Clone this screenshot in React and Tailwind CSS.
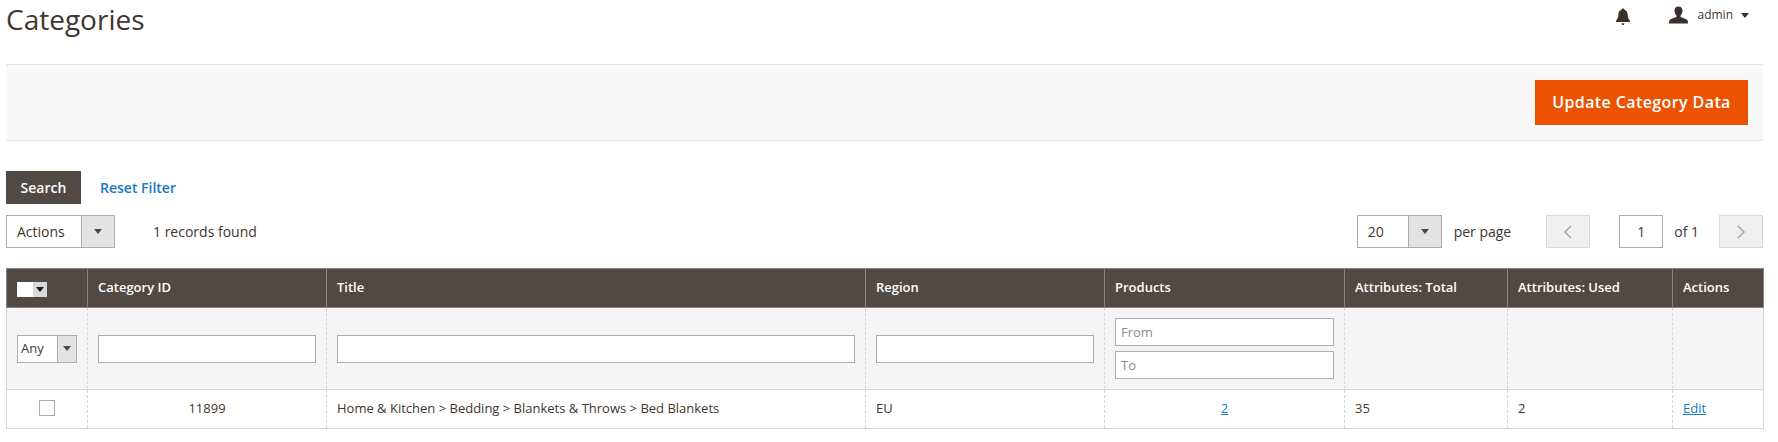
const Caret = ({ className = "" }) => (
  <svg width="8" height="5" viewBox="0 0 10 6" className={className}>
    <path d="M0 0h10L5 6z" fill="currentColor" />
  </svg>
);

const SelectBox = ({ label, w, arrow, h = "h-[33px]", pad = "pl-[10px]", size = "text-[14px]" }) => (
  <div className={`flex ${h} ${w} border border-[#adadad] bg-white`}>
    <span className={`flex-1 ${pad} flex items-center ${size} text-[#41362f]`}>{label}</span>
    <span className={`${arrow} flex items-center justify-center border-l border-[#adadad] bg-[#e3e3e3] text-[#514943]`}>
      <Caret />
    </span>
  </div>
);

const TextInput = ({ placeholder, className = "" }) => (
  <input
    placeholder={placeholder}
    readOnly
    className={`block w-full h-[28px] border border-[#adadad] bg-white px-[5px] text-[13px] text-[#41362f] placeholder:text-[#8a8a8a] outline-none ${className}`}
  />
);

const cols = [81, 239, 539, 239, 240, 163, 165, 91];
const heads = ["Category ID", "Title", "Region", "Products", "Attributes: Total", "Attributes: Used", "Actions"];

export default function App() {
  return (
    <div className="h-[442px] w-[1778px] overflow-hidden bg-white pl-[6px] pr-[15px] text-[14px] text-[#41362f] font-['Open_Sans',sans-serif]">
      <header className="flex h-[64px] items-start justify-between">
        <h1 className="text-[28px] font-normal leading-[38px] text-[#41362f]">Categories</h1>
        <div className="flex items-center pr-[14px] pt-[4px] text-[#41362f]">
          <svg width="16" height="18" viewBox="0 0 16 20" className="mr-[38px] mt-[4px]">
            <path fill="#3b302a" d="M8 0.5c1 0 1.6.7 1.6 1.5 2.4.7 3.4 2.6 3.5 5 .1 3 .6 5.2 2.6 7.2V15.5H.3v-1.300c2-2 2.500-4.200 2.600-7.200.1-2.400 1.100-4.300 3.500-5C6.400 1.200 7 .5 8 .5z" />
            <path fill="#3b302a" d="M6.400 17h3.200c0 1-.7 2-1.600 2s-1.600-1-1.600-2z" />
          </svg>
          <svg width="19" height="18" viewBox="0 0 20 18" className="mr-[9px]">
            <path fill="#3b302a" d="M10 0c2.600 0 4.200 1.700 4.200 4.300 0 2-.8 4.200-2 5.300v1.500c.8.7 7.700 1.700 7.700 4.600V18H.1v-2.300c0-2.900 6.900-3.900 7.700-4.600V9.600c-1.200-1.100-2-3.300-2-5.300C5.800 1.700 7.400 0 10 0z" />
          </svg>
          <span className="text-[12px] leading-[20px]">admin</span>
          <Caret className="ml-[8px] text-[#3b302a]" />
        </div>
      </header>

      <div className="flex h-[77px] items-start justify-end border-y border-[#e3e3e3] bg-[#f8f8f8] pr-[15px] pt-[15px]">
        <button className="h-[45px] w-[213px] bg-[#eb5202] pb-[1px] text-[16px] font-semibold tracking-[0.4px] text-white">
          Update Category Data
        </button>
      </div>

      <div className="flex h-[33px] items-center mt-[30px]">
        <button className="h-[33px] w-[75px] bg-[#514943] text-[14px] font-semibold text-white">Search</button>
        <a className="ml-[19px] text-[14px] font-semibold text-[#1979c3]">Reset Filter</a>
      </div>

      <div className="mt-[11px] flex h-[33px] items-center">
        <SelectBox label="Actions" w="w-[109px]" arrow="w-[33px]" />
        <span className="ml-[38px]">1 records found</span>
        <div className="ml-auto flex items-center">
          <SelectBox label="20" w="w-[85px]" arrow="w-[33px]" />
          <span className="ml-[12px] mr-[35px]">per page</span>
          <span className="flex h-[33px] w-[44px] items-center justify-center border border-[#d9d9d9] bg-[#f0f0f0]">
            <svg width="10" height="14" viewBox="0 0 10 14"><path d="M8 1L2 7l6 6" fill="none" stroke="#a6a6a6" strokeWidth="1.500" /></svg>
          </span>
          <span className="ml-[29px] flex h-[33px] w-[44px] items-center justify-center border border-[#adadad] bg-white">1</span>
          <span className="ml-[11px] mr-[20px]">of 1</span>
          <span className="flex h-[33px] w-[44px] items-center justify-center border border-[#d9d9d9] bg-[#f0f0f0]">
            <svg width="10" height="14" viewBox="0 0 10 14"><path d="M2 1l6 6-6 6" fill="none" stroke="#a6a6a6" strokeWidth="1.500" /></svg>
          </span>
        </div>
      </div>

      <table className="mt-[20px] w-[1757px] table-fixed border-collapse text-[13px]">
        <colgroup>
          {cols.map((c, i) => <col key={i} style={{ width: c }} />)}
        </colgroup>
        <thead>
          <tr className="h-[39px] bg-[#514943]">
            <th className="border border-[#8a837f] pl-[10px] pt-[2px] text-left align-middle">
              <span className="flex h-[15px] w-[30px] bg-white">
                <span className="flex-1" />
                <span className="flex w-[14px] items-center justify-center bg-[#d9d9d9] text-[#1f1a17]"><Caret /></span>
              </span>
            </th>
            {heads.map((h) => (
              <th key={h} className="whitespace-nowrap border border-[#8a837f] pb-[1px] pl-[10px] text-left text-[13px] font-semibold text-white">{h}</th>
            ))}
          </tr>
        </thead>
        <tbody>
          <tr className="h-[82px] border-x border-[#d6d6d6] border-b border-b-[#d6d6d6] bg-[#f5f5f5]">
            <td className="border-r border-dashed border-[#d6d6d6] pl-[10px]">
              <SelectBox label="Any" w="w-[60px]" arrow="w-[19px]" h="h-[28px]" pad="pl-[3px]" size="text-[13px]" />
            </td>
            <td className="border-r border-dashed border-[#d6d6d6] px-[10px]"><TextInput /></td>
            <td className="border-r border-dashed border-[#d6d6d6] px-[10px]"><TextInput /></td>
            <td className="border-r border-dashed border-[#d6d6d6] px-[10px]"><TextInput /></td>
            <td className="border-r border-dashed border-[#d6d6d6] px-[10px]">
              <TextInput placeholder="From" />
              <TextInput placeholder="To" className="mt-[5px]" />
            </td>
            <td className="border-r border-dashed border-[#d6d6d6]" />
            <td className="border-r border-dashed border-[#d6d6d6]" />
            <td />
          </tr>
          <tr className="h-[39px] border-x border-b border-[#d6d6d6] bg-white">
            <td className="border-r border-dashed border-[#d6d6d6]">
              <span className="mx-auto mb-[2px] block h-[16px] w-[16px] border border-[#adadad] bg-white" />
            </td>
            <td className="border-r border-dashed border-[#d6d6d6] text-center">11899</td>
            <td className="border-r border-dashed border-[#d6d6d6] pl-[10px] whitespace-nowrap">Home &amp; Kitchen &gt; Bedding &gt; Blankets &amp; Throws &gt; Bed Blankets</td>
            <td className="border-r border-dashed border-[#d6d6d6] pl-[10px]">EU</td>
            <td className="border-r border-dashed border-[#d6d6d6] text-center"><a className="text-[#1979c3] underline">2</a></td>
            <td className="border-r border-dashed border-[#d6d6d6] pl-[10px]">35</td>
            <td className="border-r border-dashed border-[#d6d6d6] pl-[10px]">2</td>
            <td className="pl-[10px]"><a className="text-[#1979c3] underline">Edit</a></td>
          </tr>
        </tbody>
      </table>
    </div>
  );
}
